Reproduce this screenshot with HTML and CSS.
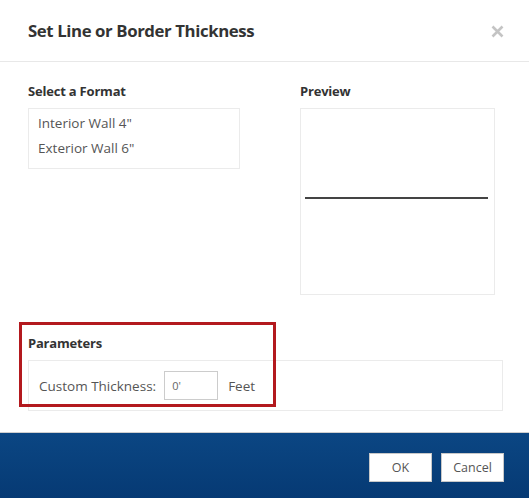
FILE: index.html
```html
<!DOCTYPE html>
<html>
<head>
<meta charset="utf-8">
<link rel="stylesheet" href="styles.css">
</head>
<body>
<div class="dialog">
  <div class="header">
    <h1 class="title">Set Line or Border Thickness</h1>
    <span class="close">
      <svg width="13" height="13" viewBox="0 0 13 13"><path d="M1.5 1.5 L11.5 11.5 M11.5 1.5 L1.5 11.5" stroke="#c4c4c4" stroke-width="2.6" stroke-linecap="butt"/></svg>
    </span>
  </div>
  <div class="body">
    <div class="columns">
      <div class="col-left">
        <div class="label">Select a Format</div>
        <div class="listbox">
          <div class="item">Interior Wall 4"</div>
          <div class="item">Exterior Wall 6"</div>
        </div>
      </div>
      <div class="col-right">
        <div class="label">Preview</div>
        <div class="preview"><div class="preview-line"></div></div>
      </div>
    </div>
    <div class="params">
      <div class="label">Parameters</div>
      <div class="panel">
        <span class="field-label">Custom Thickness:</span>
        <span class="input">0'</span>
        <span class="unit">Feet</span>
      </div>
      <div class="highlight"></div>
    </div>
  </div>
  <div class="footer">
    <button class="btn">OK</button>
    <button class="btn">Cancel</button>
  </div>
</div>
</body>
</html>
```
FILE: styles.css
```css
html, body {
  margin: 0;
  padding: 0;
  background: #fff;
}
body {
  font-family: "Open Sans", "Liberation Sans", sans-serif;
  color: #555;
}
.dialog {
  width: 529px;
  height: 498px;
  display: flex;
  flex-direction: column;
}
.header {
  height: 62px;
  border-bottom: 1px solid #e8e8e8;
  display: flex;
  align-items: center;
  justify-content: space-between;
  padding: 0 25px 0 28px;
  box-sizing: border-box;
  flex-shrink: 0;
}
.title {
  margin: 0;
  font-size: 16.8px;
  font-weight: 700;
  color: #333;
  letter-spacing: -0.4px;
}
.close {
  display: flex;
  margin-top: 1px;
}
.body {
  padding: 20px 26px 0 28px;
  flex: 1;
}
.columns {
  display: flex;
  gap: 60px;
}
.col-left {
  width: 212px;
}
.col-right {
  width: 195px;
}
.label {
  font-size: 13px;
  font-weight: 700;
  color: #333;
  height: 18px;
  line-height: 18px;
  margin-bottom: 8px;
  letter-spacing: -0.2px;
}
.listbox {
  border: 1px solid #ebebeb;
  height: 61px;
  box-sizing: border-box;
  padding: 2px 9px;
}
.item {
  font-size: 13.5px;
  line-height: 25px;
  color: #555;
}
.preview {
  border: 1px solid #ebebeb;
  height: 187px;
  box-sizing: border-box;
  padding: 88px 6px 0 4px;
}
.preview-line {
  height: 2px;
  background: #444;
}
.params {
  position: relative;
  margin-top: 39px;
}
.panel {
  border: 1px solid #ebebeb;
  height: 51px;
  box-sizing: border-box;
  display: flex;
  align-items: center;
  padding: 0 10px;
  font-size: 13.5px;
  color: #555;
}
.field-label {
  margin-right: 8px;
}
.input {
  width: 54px;
  height: 29px;
  border: 1px solid #ccc;
  box-sizing: border-box;
  font-size: 11px;
  line-height: 27px;
  padding-left: 7px;
  margin-right: 10px;
  color: #666;
}
.highlight {
  position: absolute;
  left: -9px;
  top: -12px;
  width: 257px;
  height: 85px;
  border: 3px solid #b3191e;
  box-sizing: border-box;
}
.footer {
  height: 66px;
  flex-shrink: 0;
  border-top: 1px solid #cfcfcf;
  box-sizing: border-box;
  background: linear-gradient(#0b4683, #063a74);
  display: flex;
  justify-content: flex-end;
  align-items: flex-start;
  padding: 20px 25px 0 0;
  gap: 9px;
}
.btn {
  width: 63px;
  height: 29px;
  background: #fff;
  border: 1px solid #c8c8c8;
  font-family: "Open Sans", "Liberation Sans", sans-serif;
  font-size: 12.5px;
  color: #555;
  padding: 0;
}
```
